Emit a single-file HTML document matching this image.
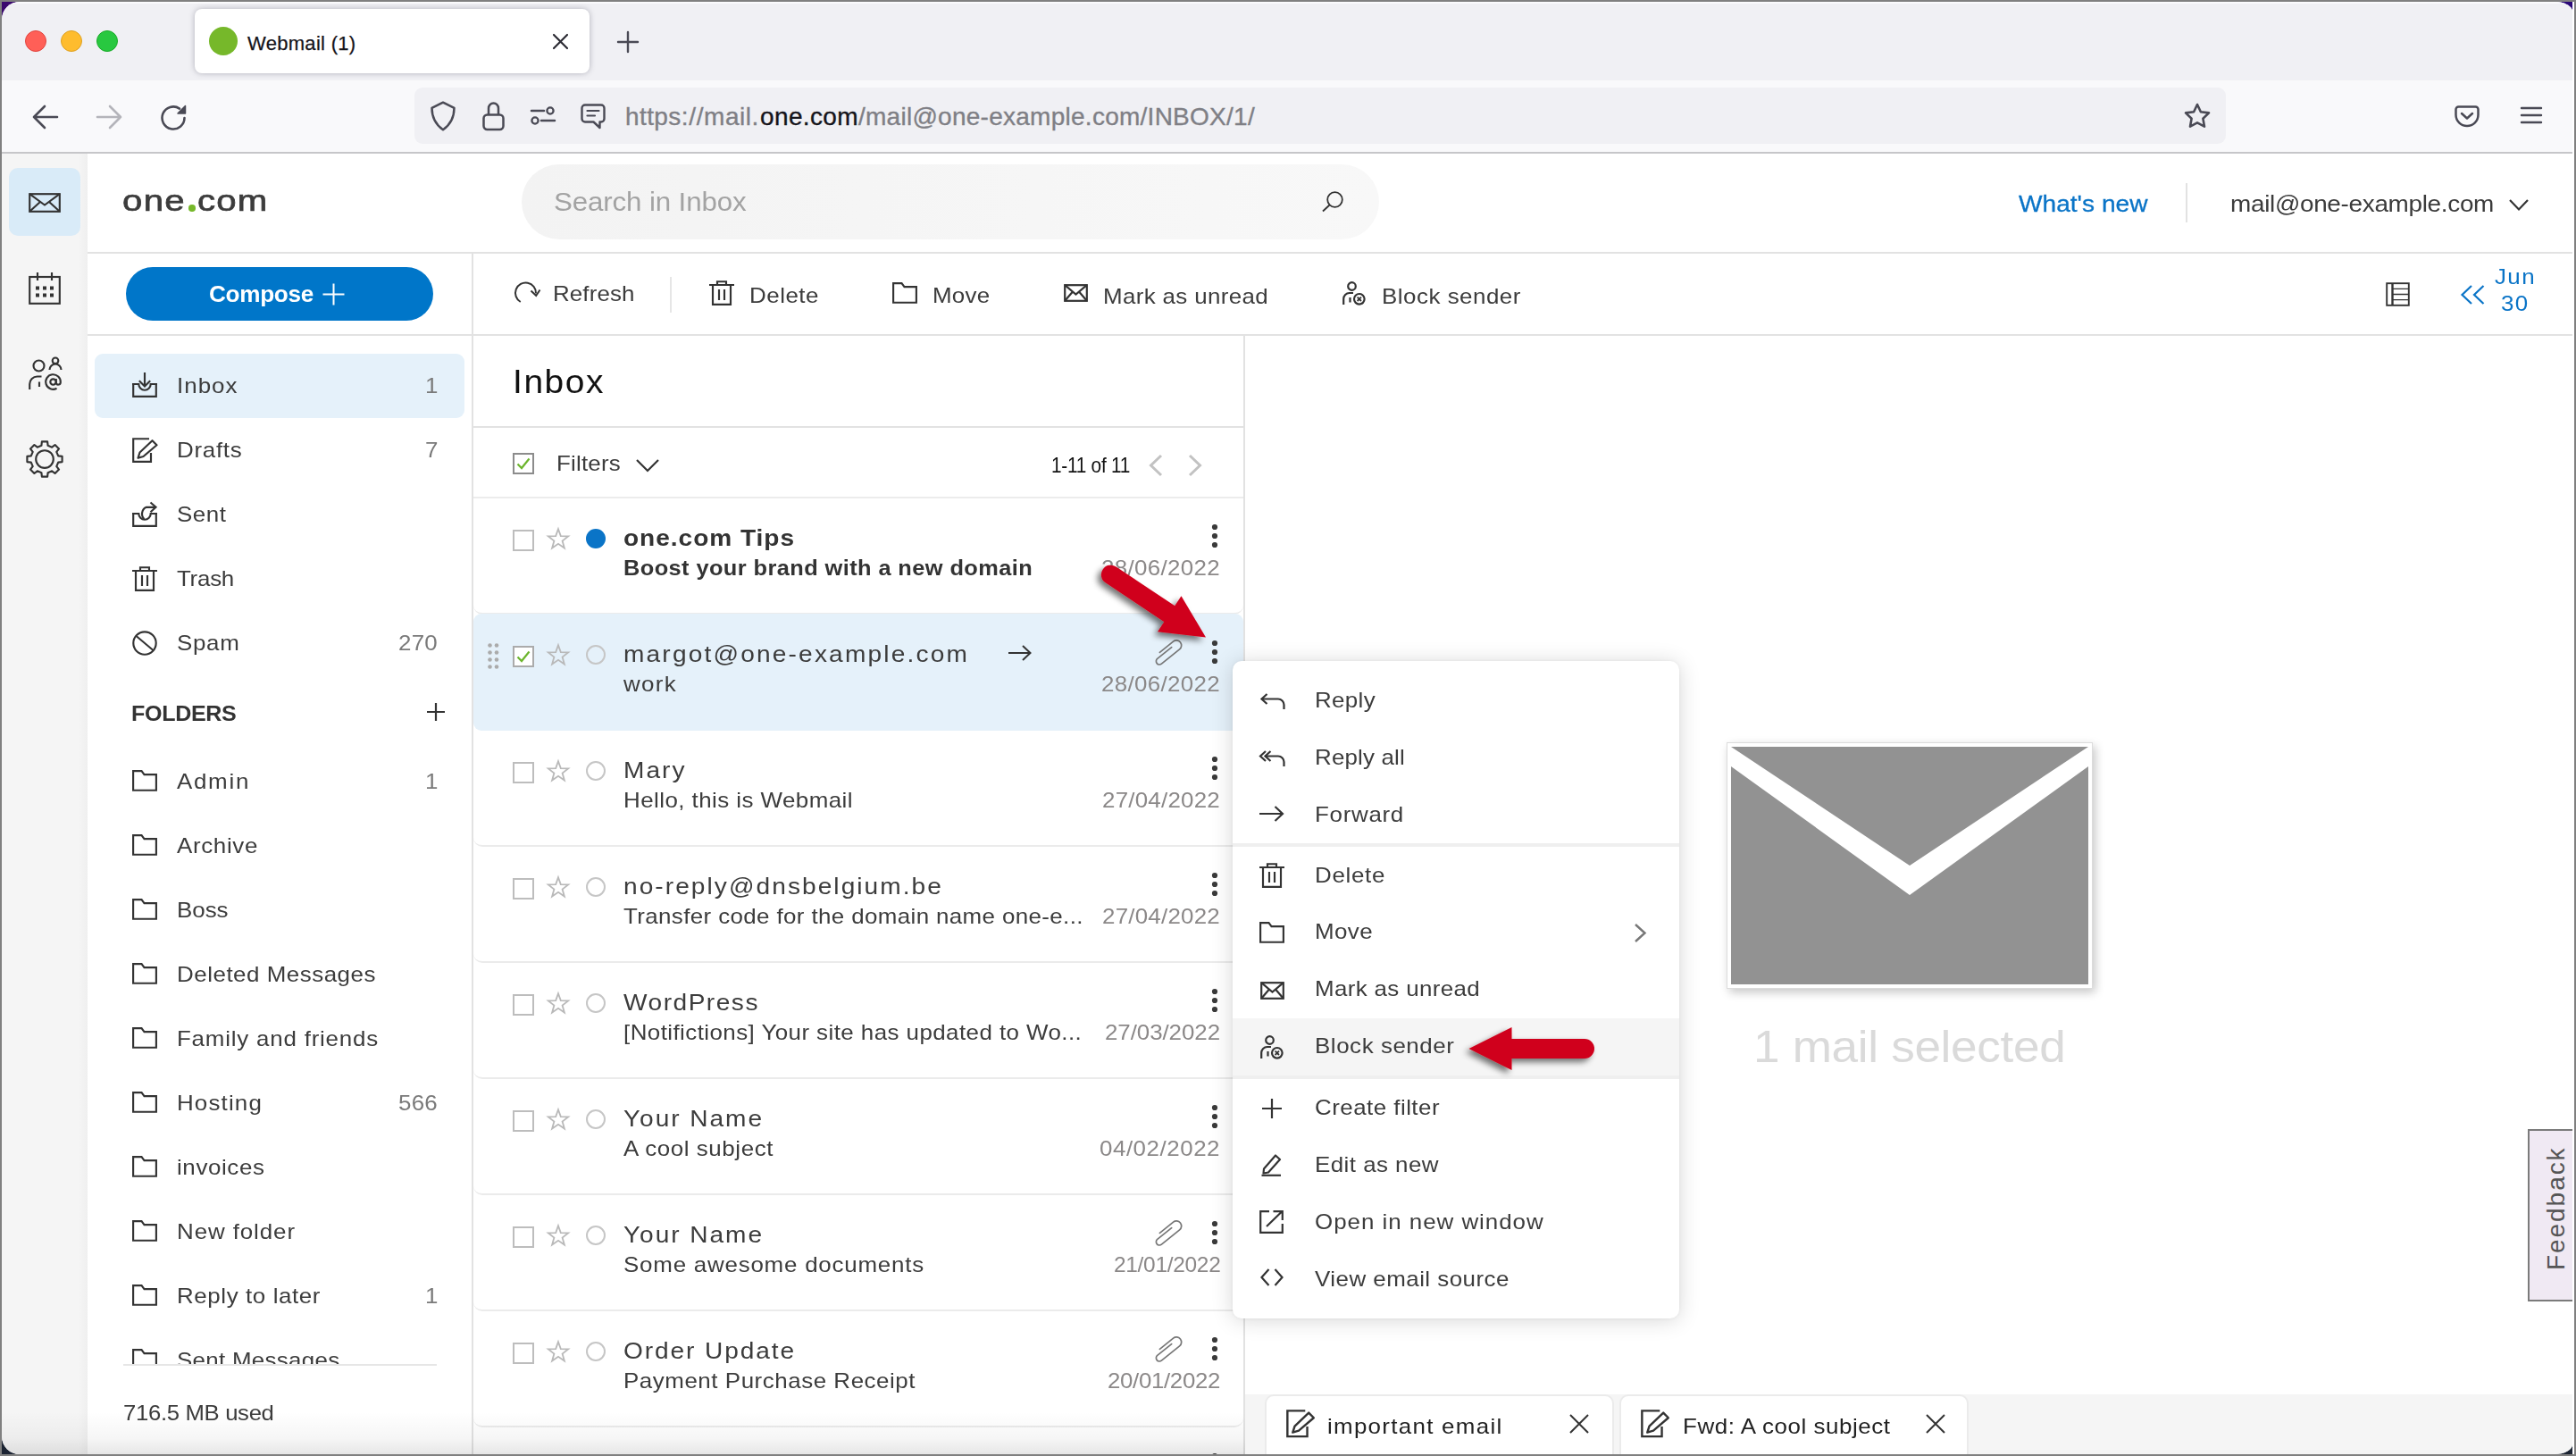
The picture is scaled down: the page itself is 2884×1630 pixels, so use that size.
<!DOCTYPE html>
<html lang="en"><head><meta charset="utf-8"><title>Webmail (1)</title>
<style>
html,body{margin:0;padding:0;}
body{width:2884px;height:1630px;overflow:hidden;background:#808080;font-family:'Liberation Sans',sans-serif;}
#screen{position:relative;width:2884px;height:1630px;overflow:hidden;}
#screen div,#screen svg,#screen span.t{position:absolute;box-sizing:border-box;}
span.t{white-space:pre;line-height:1;color:#3c3c3c;transform-origin:0 50%;}
svg{overflow:visible;}
.ic{fill:none;stroke:#333;stroke-width:2.4;}

</style></head>
<body>
<div id="screen">
<div style="left:2px;top:2px;width:30px;height:30px;background:#3a0a6e;"></div>
<div style="left:2850px;top:2px;width:30px;height:30px;background:#2a0878;"></div>
<div style="left:2880px;top:2px;width:2px;height:1626px;background:#fff;"></div>
<div style="left:2px;top:1598px;width:30px;height:30px;background:#1c2433;"></div>
<div style="left:2850px;top:1598px;width:30px;height:30px;background:#1c2433;"></div>
<div id="win" style="left:2px;top:2px;width:2878px;height:1626px;border-radius:20px 20px 20px 20px / 20px 11px 11px 20px;overflow:hidden;background:#fff;">
<div id="w" style="left:-2px;top:-2px;width:2884px;height:1630px;">
<div style="left:0px;top:0px;width:2884px;height:90px;background:#f0f0f4;"></div>
<div style="left:0px;top:2px;width:2884px;height:1.5px;background:#fbfbfd;"></div>
<div style="left:28px;top:34px;width:24px;height:24px;border-radius:50%;background:#ff5f57;border:1px solid #e0443e;"></div>
<div style="left:68px;top:34px;width:24px;height:24px;border-radius:50%;background:#febc2e;border:1px solid #dea123;"></div>
<div style="left:108px;top:34px;width:24px;height:24px;border-radius:50%;background:#28c840;border:1px solid #1aab29;"></div>
<div style="left:218px;top:10px;width:442px;height:72px;background:#fff;border-radius:8px;box-shadow:0 0 6px rgba(60,60,80,.35);"></div>
<div style="left:234px;top:30px;width:32px;height:32px;border-radius:50%;background:#76b82a;"></div>
<span class="t" style="left:277.0px;top:37.9px;font-size:22px;letter-spacing:0.30px;color:#15141a;-webkit-text-stroke:0.25px #15141a;">Webmail (1)</span>
<svg style="left:619px;top:38px;" width="17" height="17" viewBox="0 0 17 17"><path d="M1 1 L16 16 M16 1 L1 16" stroke="#2b2a33" stroke-width="2.2" fill="none" stroke-linecap="round"/></svg>
<svg style="left:691px;top:35px;" width="24" height="24" viewBox="0 0 24 24"><path d="M12 1 V23 M1 12 H23" stroke="#4a4a55" stroke-width="2.4" fill="none" stroke-linecap="round"/></svg>
<div style="left:0px;top:90px;width:2884px;height:80px;background:#f9f9fb;"></div>
<div style="left:0px;top:170px;width:2884px;height:2px;background:#c6c6c9;"></div>
<svg style="left:36px;top:117px;" width="30" height="28" viewBox="0 0 30 28"><path d="M28 14 H2 M14 2 L2 14 L14 26" stroke="#4a4a55" stroke-width="2.6" fill="none" stroke-linecap="round" stroke-linejoin="round"/></svg>
<svg style="left:107px;top:117px;" width="30" height="28" viewBox="0 0 30 28"><path d="M2 14 H28 M16 2 L28 14 L16 26" stroke="#b4b4ba" stroke-width="2.6" fill="none" stroke-linecap="round" stroke-linejoin="round"/></svg>
<svg style="left:179px;top:116px;" width="32" height="32" viewBox="0 0 32 32"><path d="M27.5 16 A12.5 12.5 0 1 1 22 5.6" stroke="#4a4a55" stroke-width="2.6" fill="none" stroke-linecap="round"/><path d="M28.5 2.5 V11 H20 Z" fill="#4a4a55" stroke="#4a4a55" stroke-width="1.5" stroke-linejoin="round"/></svg>
<div style="left:464px;top:98px;width:2028px;height:63px;background:#f0f0f4;border-radius:9px;"></div>
<svg style="left:481px;top:113px;" width="30" height="34" viewBox="0 0 30 34"><path d="M15 1.700 L27.500 7.800 C27.500 19 22.500 27 15 32.300 C7.500 27 2.500 19 2.500 7.800 Z" stroke="#4a4a55" stroke-width="2.500" fill="none" stroke-linejoin="round"/></svg>
<svg style="left:539.5px;top:114px;" width="25" height="32" viewBox="0 0 25 32"><rect x="1.500" y="14.500" width="22" height="16.500" rx="4" stroke="#4a4a55" stroke-width="2.500" fill="none"/><path d="M7 14.500 V7.200 A5.500 5.800 0 0 1 18 7.200 V14.500" stroke="#4a4a55" stroke-width="2.500" fill="none"/></svg>
<svg style="left:594px;top:119px;" width="28" height="22" viewBox="0 0 28 22"><circle cx="22" cy="5" r="3.6" stroke="#4a4a55" stroke-width="2.3" fill="none"/><path d="M1 5 H15" stroke="#4a4a55" stroke-width="2.5" stroke-linecap="round"/><circle cx="5" cy="16" r="3.6" stroke="#4a4a55" stroke-width="2.3" fill="none"/><path d="M12 16 H27" stroke="#4a4a55" stroke-width="2.5" stroke-linecap="round"/></svg>
<svg style="left:650px;top:116px;" width="28" height="29" viewBox="0 0 28 29"><path d="M5 1.5 H23 A3.5 3.5 0 0 1 26.500 5 V17 A3.5 3.5 0 0 1 23 20.5 H21.500 V27 L14.500 20.5 H5 A3.5 3.5 0 0 1 1.500 17 V5 A3.5 3.5 0 0 1 5 1.500 Z" stroke="#4a4a55" stroke-width="2.4" fill="none" stroke-linejoin="round"/><path d="M7.500 8 H20.500 M7.500 13.500 H16" stroke="#4a4a55" stroke-width="2.2" stroke-linecap="round"/></svg>
<span class="t" style="left:700.0px;top:117.3px;font-size:28px;letter-spacing:0.39px;color:#7f7f85;-webkit-text-stroke:0.35px #7f7f85;">https:</span>
<span class="t" style="left:771.3px;top:117.3px;font-size:28px;letter-spacing:0.57px;color:#7f7f85;-webkit-text-stroke:0.35px #7f7f85;">//mail.</span>
<span class="t" style="left:851.0px;top:117.3px;font-size:28px;letter-spacing:0.37px;color:#15141a;-webkit-text-stroke:0.35px #15141a;">one.com</span>
<span class="t" style="left:961.0px;top:117.3px;font-size:28px;letter-spacing:0.26px;color:#7f7f85;-webkit-text-stroke:0.35px #7f7f85;">/mail@one-example.com/INBOX/1/</span>
<svg style="left:2444px;top:114px;" width="32" height="32" viewBox="0 0 32 32"><path d="M16 3 L19.900 11.200 L29 12.400 L22.400 18.700 L24 27.700 L16 23.400 L8 27.700 L9.600 18.700 L3 12.400 L12.100 11.200 Z" stroke="#4a4a55" stroke-width="2.6" fill="none" stroke-linejoin="round"/></svg>
<svg style="left:2748px;top:118px;" width="28" height="25" viewBox="0 0 28 25"><path d="M4.500 1.500 H23.500 A3 3 0 0 1 26.500 4.500 V10.500 A12.500 12.500 0 0 1 1.500 10.500 V4.500 A3 3 0 0 1 4.500 1.500 Z" stroke="#4a4a55" stroke-width="2.5" fill="none"/><path d="M8 9 L14 14.500 L20 9" stroke="#4a4a55" stroke-width="2.5" fill="none" stroke-linecap="round" stroke-linejoin="round"/></svg>
<svg style="left:2822px;top:119px;" width="24" height="20" viewBox="0 0 24 20"><path d="M1 2 H23 M1 10 H23 M1 18 H23" stroke="#4a4a55" stroke-width="2.4" stroke-linecap="round"/></svg>
<div style="left:0px;top:172px;width:98px;height:1460px;background:linear-gradient(90deg,#f5f5f5 0,#f5f5f5 88px,#efefef 100%);"></div>
<div style="left:10px;top:188px;width:80px;height:76px;background:#d9ebf8;border-radius:10px;"></div>
<svg style="left:32px;top:216px;" width="36" height="22" viewBox="0 0 36 22"><g stroke="#333" stroke-width="2.15" fill="none" ><rect x="1.2" y="1.2" width="33.600" height="19.600"/><path d="M1.200 1.200 L18 13.500 L34.800 1.200 M1.200 20.800 L13 10 M34.800 20.800 L23 10"/></g></svg>
<svg style="left:32px;top:305px;" width="36" height="36" viewBox="0 0 36 36"><g stroke="#333" stroke-width="2.15" fill="none" ><rect x="1.2" y="5" width="33.600" height="29.800"/><path d="M10 0 V9 M26 0 V9"/><rect x="8" y="15.5" width="4" height="4" fill="#333" stroke="none"/><rect x="16" y="15.5" width="4" height="4" fill="#333" stroke="none"/><rect x="24" y="15.5" width="4" height="4" fill="#333" stroke="none"/><rect x="8" y="23.5" width="4" height="4" fill="#333" stroke="none"/><rect x="16" y="23.5" width="4" height="4" fill="#333" stroke="none"/><rect x="24" y="23.5" width="4" height="4" fill="#333" stroke="none"/></g></svg>
<svg style="left:32px;top:400px;" width="38" height="37" viewBox="0 0 38 37"><g stroke="#333" stroke-width="2.15" fill="none" ><circle cx="11.500" cy="9.500" r="6"/><path d="M1.200 36 V30 A8.500 8.500 0 0 1 9.700 21.500 H14.500"/><path d="M12 27.500 V33"/><circle cx="30" cy="3.800" r="3.300"/><path d="M23.500 14 A6.500 6.500 0 0 1 36.500 14"/><circle cx="27.500" cy="27.500" r="3.200"/><path d="M30.800 24 V29 A2.600 2.600 0 0 0 35.800 28 A8.300 8.300 0 1 0 31.500 34.800"/></g></svg>
<svg style="left:29px;top:493px;" width="42" height="42" viewBox="0 0 42 42"><g stroke="#333" stroke-width="2.15" fill="none" ><path d="M17.9 1.4 L24.1 1.4 L24.6 5.8 L29.2 7.7 L32.6 5.0 L37.0 9.4 L34.3 12.8 L36.2 17.4 L40.6 17.9 L40.6 24.1 L36.2 24.6 L34.3 29.2 L37.0 32.6 L32.6 37.0 L29.2 34.3 L24.6 36.2 L24.1 40.6 L17.9 40.6 L17.4 36.2 L12.8 34.3 L9.4 37.0 L5.0 32.6 L7.7 29.2 L5.8 24.6 L1.4 24.1 L1.4 17.9 L5.8 17.4 L7.7 12.8 L5.0 9.4 L9.4 5.0 L12.8 7.7 L17.4 5.8 Z" stroke-linejoin="round"/><circle cx="21" cy="21" r="9.800"/></g></svg>
<div style="left:98px;top:282px;width:2786px;height:2px;background:#e2e2e2;"></div>
<span class="t" style="left:137.0px;top:208.1px;font-size:33.5px;letter-spacing:1.09px;transform:scaleX(1.200);-webkit-text-stroke:0.700px #3c3c3c;">one</span>
<div style="left:211px;top:229px;width:7.5px;height:7.5px;border-radius:50%;background:#76b82a;"></div>
<span class="t" style="left:221.0px;top:208.1px;font-size:33.5px;letter-spacing:0.98px;transform:scaleX(1.200);-webkit-text-stroke:0.700px #3c3c3c;">com</span>
<div style="left:584px;top:184px;width:960px;height:84px;background:linear-gradient(90deg,#f3f3f3,#f8f8f8);border-radius:42px;"></div>
<span class="t" style="left:620.0px;top:212.0px;font-size:29px;letter-spacing:-0.13px;transform:scaleX(1.080);color:#a3a3a3;">Search in Inbox</span>
<svg style="left:1480px;top:214px;" width="26" height="24" viewBox="0 0 26 24"><g stroke="#333" stroke-width="1.8" fill="none" ><circle cx="14.500" cy="9.500" r="8.300"/><path d="M8.500 15.500 L1 22.500"/></g></svg>
<span class="t" style="left:2259.5px;top:214.5px;font-size:26px;letter-spacing:0.02px;transform:scaleX(1.080);color:#0a74c7;-webkit-text-stroke:0.3px #0a74c7;">What&#x27;s new</span>
<div style="left:2447px;top:205px;width:2px;height:44px;background:#e2e2e2;"></div>
<span class="t" style="left:2497.0px;top:214.5px;font-size:26px;letter-spacing:-0.30px;transform:scaleX(1.074);">mail@one-example.com</span>
<svg style="left:2809px;top:223px;" width="22" height="13" viewBox="0 0 22 13"><g stroke="#333" stroke-width="2.2" fill="none" ><path d="M1 1 L11 11.500 L21 1"/></g></svg>
<div style="left:98px;top:374px;width:2786px;height:2px;background:#e2e2e2;"></div>
<div style="left:528px;top:284px;width:2px;height:1346px;background:#e2e2e2;"></div>
<div style="left:141px;top:299px;width:344px;height:60px;background:#0076c9;border-radius:30px;"></div>
<span class="t" style="left:234.0px;top:316.8px;font-size:25px;letter-spacing:-0.30px;transform:scaleX(1.046);font-weight:700;color:#fff;">Compose</span>
<svg style="left:361px;top:317px;" width="25" height="25" viewBox="0 0 25 25"><path d="M12.500 0.500 V24.500 M0.500 12.500 H24.500" stroke="#fff" stroke-width="2" fill="none"/></svg>
<svg style="left:575px;top:316px;" width="30" height="27" viewBox="0 0 30 27"><g stroke="#333" stroke-width="2" fill="none" ><path d="M7.750 22 A11.500 11.500 0 1 1 25 12.500"/><path d="M19.500 9.500 L25.200 15 L29.500 8.500"/></g></svg>
<span class="t" style="left:618.5px;top:317.2px;font-size:24px;letter-spacing:0.10px;transform:scaleX(1.080);">Refresh</span>
<div style="left:750px;top:310px;width:2px;height:40px;background:#e6e6e6;"></div>
<svg style="left:794px;top:314px;" width="28" height="28" viewBox="0 0 28 28"><g stroke="#333" stroke-width="2.15" fill="none" ><path d="M0 5 H28 M9 5 V1.200 H19 V5"/><path d="M4 5 V26.800 H24 V5"/><path d="M11 10 V22 M17 10 V22"/></g></svg>
<span class="t" style="left:839.0px;top:319.2px;font-size:24px;letter-spacing:0.47px;transform:scaleX(1.080);">Delete</span>
<svg style="left:999px;top:316px;" width="28" height="25" viewBox="0 0 28 25"><g stroke="#333" stroke-width="2.15" fill="none" ><path d="M1.100 22.700 V1.100 H10.500 L13.500 5.100 H26.900 V22.700 Z"/></g></svg>
<span class="t" style="left:1044.0px;top:319.2px;font-size:24px;letter-spacing:0.26px;transform:scaleX(1.080);">Move</span>
<svg style="left:1191px;top:318px;" width="27" height="20" viewBox="0 0 27 20"><g stroke="#333" stroke-width="2.2" fill="none" ><rect x="1.200" y="1.200" width="24.600" height="17.600"/><path d="M1.200 1.200 L13.500 11.500 L25.800 1.200 M1.200 18.800 L10 8.500 M25.800 18.800 L17 8.500"/></g></svg>
<span class="t" style="left:1235.0px;top:319.9px;font-size:24px;letter-spacing:0.32px;transform:scaleX(1.080);">Mark as unread</span>
<svg style="left:1503px;top:315px;" width="27" height="27" viewBox="0 0 27 27"><g stroke="#333" stroke-width="2.2" fill="none" ><circle cx="10.500" cy="5.500" r="4.300"/><path d="M1.200 26 V19.500 A6.500 6.500 0 0 1 7.700 13 H12"/><path d="M8.500 18 V23.500"/><circle cx="18.800" cy="19.800" r="5.800"/><path d="M16.600 17.600 L21 22 M21 17.600 L16.600 22" stroke-width="1.800"/></g></svg>
<span class="t" style="left:1547.0px;top:319.9px;font-size:24px;letter-spacing:0.47px;transform:scaleX(1.080);">Block sender</span>
<svg style="left:2671px;top:316px;" width="27" height="27" viewBox="0 0 27 27"><g stroke="#333" stroke-width="1.9" fill="none" ><rect x="1.200" y="1.200" width="24.600" height="24.600"/><path d="M7.500 1.200 V25.800" stroke-width="2.400"/><path d="M8 7.300 H26 M8 13.500 H26 M8 19.700 H26" stroke-width="1.300"/></g></svg>
<svg style="left:2755px;top:319px;" width="27" height="22" viewBox="0 0 27 22"><g stroke="#0a74c7" stroke-width="2.2" fill="none" ><path d="M12 1 L1.500 11 L12 21 M25.500 1 L15 11 L25.500 21"/></g></svg>
<span class="t" style="left:2793.0px;top:298.2px;font-size:24px;letter-spacing:1.30px;transform:scaleX(1.080);color:#0a74c7;">Jun</span>
<span class="t" style="left:2800.0px;top:327.7px;font-size:24px;letter-spacing:1.23px;transform:scaleX(1.080);color:#0a74c7;">30</span>
<div style="left:106px;top:396px;width:414px;height:72px;background:#e5f1fa;border-radius:9px;"></div>
<svg style="left:148px;top:417px;" width="28" height="28" viewBox="0 0 28 28"><g stroke="#333" stroke-width="2.15" fill="none" ><path d="M1.200 13 V26.800 H26.800 V13"/><path d="M0 13 H7.300 A6.700 6.700 0 0 0 20.700 13 H28"/><path d="M14 0 V15 M7.800 9.200 L14 15.400 L20.200 9.200"/></g></svg>
<span class="t" style="left:198.0px;top:420.2px;font-size:24px;letter-spacing:0.94px;transform:scaleX(1.080);">Inbox</span>
<span class="t" style="left:476.1px;top:420.2px;font-size:24px;transform:scaleX(1.080);color:#7a7a7a;">1</span>
<svg style="left:148px;top:489.5px;" width="29" height="28" viewBox="0 0 29 28"><g stroke="#333" stroke-width="2.15" fill="none" ><path d="M21 17 V26.800 H1.200 V1.200 H19"/><path d="M22.500 3.200 L27.500 8.200 L12.500 21 L6.500 22.800 L8.500 16.500 Z" stroke-linejoin="round"/></g></svg>
<span class="t" style="left:198.0px;top:492.2px;font-size:24px;letter-spacing:0.67px;transform:scaleX(1.080);">Drafts</span>
<span class="t" style="left:476.1px;top:492.2px;font-size:24px;transform:scaleX(1.080);color:#7a7a7a;">7</span>
<svg style="left:148px;top:561.5px;" width="28" height="28" viewBox="0 0 28 28"><g stroke="#333" stroke-width="2.15" fill="none" ><path d="M1.200 13 V26.800 H26.800 V13"/><path d="M0 13 H7.300 A6.700 6.700 0 0 0 20.700 13 H28"/><path d="M13.500 19 A8 8 0 0 1 16 5.800 H26"/><path d="M20.500 0.500 L26.500 5.800 L20.500 11.200"/></g></svg>
<span class="t" style="left:198.0px;top:564.2px;font-size:24px;letter-spacing:0.50px;transform:scaleX(1.080);">Sent</span>
<svg style="left:148px;top:633.5px;" width="28" height="28" viewBox="0 0 28 28"><g stroke="#333" stroke-width="2.15" fill="none" ><path d="M0 5 H28 M9 5 V1.200 H19 V5"/><path d="M4 5 V26.800 H24 V5"/><path d="M11 10 V22 M17 10 V22"/></g></svg>
<span class="t" style="left:198.0px;top:636.2px;font-size:24px;letter-spacing:-0.24px;transform:scaleX(1.080);">Trash</span>
<svg style="left:148px;top:706px;" width="28" height="28" viewBox="0 0 28 28"><g stroke="#333" stroke-width="2.15" fill="none" ><circle cx="14" cy="14" r="12.700"/><path d="M4.500 6 L23.500 22"/></g></svg>
<span class="t" style="left:198.0px;top:708.2px;font-size:24px;letter-spacing:0.64px;transform:scaleX(1.080);">Spam</span>
<span class="t" style="left:446.0px;top:708.2px;font-size:24px;letter-spacing:0.23px;transform:scaleX(1.080);color:#7a7a7a;">270</span>
<span class="t" style="left:146.5px;top:787.2px;font-size:24px;letter-spacing:-0.30px;transform:scaleX(1.044);font-weight:700;color:#333;">FOLDERS</span>
<svg style="left:478px;top:787px;" width="20" height="20" viewBox="0 0 20 20"><path d="M10 0 V20 M0 10 H20" stroke="#333" stroke-width="2.200" fill="none"/></svg>
<div style="left:100px;top:840px;width:426px;height:688px;overflow:hidden;"><div style="left:-100px;top:-840px;width:600px;height:1630px;">
<svg style="left:148px;top:862.0px;" width="28" height="25" viewBox="0 0 28 25"><g stroke="#333" stroke-width="2.15" fill="none" ><path d="M1.100 22.700 V1.100 H10.500 L13.500 5.100 H26.900 V22.700 Z"/></g></svg>
<span class="t" style="left:198.0px;top:862.7px;font-size:24px;letter-spacing:1.58px;transform:scaleX(1.080);">Admin</span>
<span class="t" style="left:476.1px;top:862.7px;font-size:24px;transform:scaleX(1.080);color:#7a7a7a;">1</span>
<svg style="left:148px;top:934.0px;" width="28" height="25" viewBox="0 0 28 25"><g stroke="#333" stroke-width="2.15" fill="none" ><path d="M1.100 22.700 V1.100 H10.500 L13.500 5.100 H26.900 V22.700 Z"/></g></svg>
<span class="t" style="left:198.0px;top:934.7px;font-size:24px;letter-spacing:0.60px;transform:scaleX(1.080);">Archive</span>
<svg style="left:148px;top:1006.0px;" width="28" height="25" viewBox="0 0 28 25"><g stroke="#333" stroke-width="2.15" fill="none" ><path d="M1.100 22.700 V1.100 H10.500 L13.500 5.100 H26.900 V22.700 Z"/></g></svg>
<span class="t" style="left:198.0px;top:1006.7px;font-size:24px;letter-spacing:-0.03px;transform:scaleX(1.080);">Boss</span>
<svg style="left:148px;top:1078.0px;" width="28" height="25" viewBox="0 0 28 25"><g stroke="#333" stroke-width="2.15" fill="none" ><path d="M1.100 22.700 V1.100 H10.500 L13.500 5.100 H26.900 V22.700 Z"/></g></svg>
<span class="t" style="left:198.0px;top:1078.7px;font-size:24px;letter-spacing:0.48px;transform:scaleX(1.080);">Deleted Messages</span>
<svg style="left:148px;top:1150.0px;" width="28" height="25" viewBox="0 0 28 25"><g stroke="#333" stroke-width="2.15" fill="none" ><path d="M1.100 22.700 V1.100 H10.500 L13.500 5.100 H26.900 V22.700 Z"/></g></svg>
<span class="t" style="left:198.0px;top:1150.7px;font-size:24px;letter-spacing:0.73px;transform:scaleX(1.080);">Family and friends</span>
<svg style="left:148px;top:1222.0px;" width="28" height="25" viewBox="0 0 28 25"><g stroke="#333" stroke-width="2.15" fill="none" ><path d="M1.100 22.700 V1.100 H10.500 L13.500 5.100 H26.900 V22.700 Z"/></g></svg>
<span class="t" style="left:198.0px;top:1222.7px;font-size:24px;letter-spacing:1.07px;transform:scaleX(1.080);">Hosting</span>
<span class="t" style="left:446.0px;top:1222.7px;font-size:24px;letter-spacing:0.23px;transform:scaleX(1.080);color:#7a7a7a;">566</span>
<svg style="left:148px;top:1294.0px;" width="28" height="25" viewBox="0 0 28 25"><g stroke="#333" stroke-width="2.15" fill="none" ><path d="M1.100 22.700 V1.100 H10.500 L13.500 5.100 H26.900 V22.700 Z"/></g></svg>
<span class="t" style="left:198.0px;top:1294.7px;font-size:24px;letter-spacing:0.56px;transform:scaleX(1.080);">invoices</span>
<svg style="left:148px;top:1366.0px;" width="28" height="25" viewBox="0 0 28 25"><g stroke="#333" stroke-width="2.15" fill="none" ><path d="M1.100 22.700 V1.100 H10.500 L13.500 5.100 H26.900 V22.700 Z"/></g></svg>
<span class="t" style="left:198.0px;top:1366.7px;font-size:24px;letter-spacing:0.84px;transform:scaleX(1.080);">New folder</span>
<svg style="left:148px;top:1438.0px;" width="28" height="25" viewBox="0 0 28 25"><g stroke="#333" stroke-width="2.15" fill="none" ><path d="M1.100 22.700 V1.100 H10.500 L13.500 5.100 H26.900 V22.700 Z"/></g></svg>
<span class="t" style="left:198.0px;top:1438.7px;font-size:24px;letter-spacing:0.55px;transform:scaleX(1.080);">Reply to later</span>
<span class="t" style="left:476.1px;top:1438.7px;font-size:24px;transform:scaleX(1.080);color:#7a7a7a;">1</span>
<svg style="left:148px;top:1510.0px;" width="28" height="25" viewBox="0 0 28 25"><g stroke="#333" stroke-width="2.15" fill="none" ><path d="M1.100 22.700 V1.100 H10.500 L13.500 5.100 H26.900 V22.700 Z"/></g></svg>
<span class="t" style="left:198.0px;top:1510.7px;font-size:24px;letter-spacing:0.27px;transform:scaleX(1.080);">Sent Messages</span>
</div></div>
<div style="left:138px;top:1527px;width:351px;height:2px;background:#e6e6e6;"></div>
<span class="t" style="left:137.5px;top:1570.2px;font-size:24px;letter-spacing:-0.30px;transform:scaleX(1.070);">716.5 MB used</span>
<div style="left:1392px;top:376px;width:2px;height:1254px;background:#e2e2e2;"></div>
<span class="t" style="left:574.0px;top:410.0px;font-size:36px;letter-spacing:1.46px;transform:scaleX(1.080);color:#111;">Inbox</span>
<div style="left:530px;top:477px;width:862px;height:2px;background:#e2e2e2;"></div>
<div style="left:530px;top:556px;width:862px;height:2px;background:#ececec;"></div>
<div style="left:574px;top:507px;width:24px;height:24px;border:2px solid #8c8c8c;background:#fff;"><svg style="left:2px;top:3px;" width="16" height="14" viewBox="0 0 16 14"><path d="M1.500 7.500 L6 12 L14.500 1.500" stroke="#6cb52d" stroke-width="2.200" fill="none"/></svg></div>
<span class="t" style="left:623.0px;top:507.2px;font-size:24px;letter-spacing:0.19px;transform:scaleX(1.080);">Filters</span>
<svg style="left:712px;top:514px;" width="26" height="14" viewBox="0 0 26 14"><g stroke="#333" stroke-width="2.2" fill="none" ><path d="M1 1 L13 13 L25 1"/></g></svg>
<span class="t" style="left:1177.0px;top:509.2px;font-size:24px;letter-spacing:-0.30px;transform:scaleX(0.867);color:#111;">1-11 of 11</span>
<svg style="left:1287px;top:509px;" width="14" height="24" viewBox="0 0 14 24"><g stroke="#c2c2c2" stroke-width="3" fill="none" ><path d="M13 1 L1.500 12 L13 23"/></g></svg>
<svg style="left:1331px;top:509px;" width="14" height="24" viewBox="0 0 14 24"><g stroke="#c2c2c2" stroke-width="3" fill="none" ><path d="M1 1 L12.500 12 L1 23"/></g></svg>
<div style="left:530px;top:558px;width:862px;height:130px;border-bottom:2px solid #ebebeb;border-radius:0 0 10px 10px;"></div>
<div style="left:574px;top:592.5px;width:24px;height:24px;border:2px solid #bdbdbd;background:#fff;"></div>
<svg style="left:611px;top:590px;" width="28" height="28" viewBox="0 0 28 28"><path d="M14.0 2.2 L16.8 10.1 L25.2 10.4 L18.6 15.5 L20.9 23.5 L14.0 18.8 L7.1 23.5 L9.4 15.5 L2.8 10.4 L11.2 10.1 Z" stroke="#b9b9b9" stroke-width="1.800" fill="none"/></svg>
<div style="left:656px;top:592px;width:22px;height:22px;border-radius:50%;background:#0a74c7;"></div>
<span class="t" style="left:698.0px;top:589.0px;font-size:26px;letter-spacing:0.89px;transform:scaleX(1.080);font-weight:700;color:#333;">one.com Tips</span>
<span class="t" style="left:698.0px;top:624.6px;font-size:23.5px;letter-spacing:0.38px;transform:scaleX(1.080);font-weight:700;color:#333;">Boost your brand with a new domain</span>
<span class="t" style="left:1233.0px;top:624.2px;font-size:24px;letter-spacing:0.30px;transform:scaleX(1.080);color:#8b8888;">28/06/2022</span>
<svg style="left:1356px;top:586px;" width="8" height="28" viewBox="0 0 8 28"><circle cx="4" cy="4" r="3.100" fill="#3a3a3a"/><circle cx="4" cy="14" r="3.100" fill="#3a3a3a"/><circle cx="4" cy="24" r="3.100" fill="#3a3a3a"/></svg>
<div style="left:530px;top:687px;width:862px;height:131px;background:#e5f1fa;border-radius:9px;top:687px;"></div>
<svg style="left:546px;top:720px;" width="13" height="29" viewBox="0 0 13 29"><circle cx="2.5" cy="2.5" r="2.300" fill="#ababab"/><circle cx="2.5" cy="10.5" r="2.300" fill="#ababab"/><circle cx="2.5" cy="18.5" r="2.300" fill="#ababab"/><circle cx="2.5" cy="26.5" r="2.300" fill="#ababab"/><circle cx="10" cy="2.5" r="2.300" fill="#ababab"/><circle cx="10" cy="10.5" r="2.300" fill="#ababab"/><circle cx="10" cy="18.5" r="2.300" fill="#ababab"/><circle cx="10" cy="26.5" r="2.300" fill="#ababab"/></svg>
<div style="left:574px;top:722.5px;width:24px;height:24px;border:2px solid #ababab;background:#fff;"><svg style="left:2px;top:3px;" width="16" height="14" viewBox="0 0 16 14"><path d="M1.500 7.500 L6 12 L14.500 1.500" stroke="#6cb52d" stroke-width="2.200" fill="none"/></svg></div>
<svg style="left:611px;top:720px;" width="28" height="28" viewBox="0 0 28 28"><path d="M14.0 2.2 L16.8 10.1 L25.2 10.4 L18.6 15.5 L20.9 23.5 L14.0 18.8 L7.1 23.5 L9.4 15.5 L2.8 10.4 L11.2 10.1 Z" stroke="#b9b9b9" stroke-width="1.800" fill="none"/></svg>
<div style="left:656px;top:722px;width:22px;height:22px;border-radius:50%;border:2px solid #c6c6c6;"></div>
<span class="t" style="left:698.0px;top:719.0px;font-size:26px;letter-spacing:2.02px;transform:scaleX(1.080);">margot@one-example.com</span>
<span class="t" style="left:698.0px;top:754.2px;font-size:24px;letter-spacing:1.22px;transform:scaleX(1.080);">work</span>
<span class="t" style="left:1233.0px;top:754.2px;font-size:24px;letter-spacing:0.30px;transform:scaleX(1.080);color:#8b8888;">28/06/2022</span>
<svg style="left:1291px;top:716.5px;" width="34" height="28" viewBox="0 0 34 28"><g transform="translate(16.500,13.500) rotate(-39)"><path d="M7 -2 H-13.500 a3.700 3.700 0 0 0 0 7.400 H12.500 a5.600 5.600 0 0 0 0 -11.200 H-7" stroke="#777" stroke-width="1.700" fill="none" stroke-linecap="round"/></g></svg>
<svg style="left:1356px;top:716px;" width="8" height="28" viewBox="0 0 8 28"><circle cx="4" cy="4" r="3.100" fill="#3a3a3a"/><circle cx="4" cy="14" r="3.100" fill="#3a3a3a"/><circle cx="4" cy="24" r="3.100" fill="#3a3a3a"/></svg>
<svg style="left:1129px;top:721px;" width="26" height="20" viewBox="0 0 26 20"><g stroke="#333" stroke-width="2" fill="none" ><path d="M0 10 H24.500 M16 2 L24.500 10 L16 18"/></g></svg>
<div style="left:530px;top:818px;width:862px;height:130px;border-bottom:2px solid #ebebeb;border-radius:0 0 10px 10px;"></div>
<div style="left:574px;top:852.5px;width:24px;height:24px;border:2px solid #bdbdbd;background:#fff;"></div>
<svg style="left:611px;top:850px;" width="28" height="28" viewBox="0 0 28 28"><path d="M14.0 2.2 L16.8 10.1 L25.2 10.4 L18.6 15.5 L20.9 23.5 L14.0 18.8 L7.1 23.5 L9.4 15.5 L2.8 10.4 L11.2 10.1 Z" stroke="#b9b9b9" stroke-width="1.800" fill="none"/></svg>
<div style="left:656px;top:852px;width:22px;height:22px;border-radius:50%;border:2px solid #c6c6c6;"></div>
<span class="t" style="left:698.0px;top:849.0px;font-size:26px;letter-spacing:1.87px;transform:scaleX(1.080);">Mary</span>
<span class="t" style="left:698.0px;top:884.2px;font-size:24px;letter-spacing:0.41px;transform:scaleX(1.080);">Hello, this is Webmail</span>
<span class="t" style="left:1234.0px;top:884.2px;font-size:24px;letter-spacing:0.21px;transform:scaleX(1.080);color:#8b8888;">27/04/2022</span>
<svg style="left:1356px;top:846px;" width="8" height="28" viewBox="0 0 8 28"><circle cx="4" cy="4" r="3.100" fill="#3a3a3a"/><circle cx="4" cy="14" r="3.100" fill="#3a3a3a"/><circle cx="4" cy="24" r="3.100" fill="#3a3a3a"/></svg>
<div style="left:530px;top:948px;width:862px;height:130px;border-bottom:2px solid #ebebeb;border-radius:0 0 10px 10px;"></div>
<div style="left:574px;top:982.5px;width:24px;height:24px;border:2px solid #bdbdbd;background:#fff;"></div>
<svg style="left:611px;top:980px;" width="28" height="28" viewBox="0 0 28 28"><path d="M14.0 2.2 L16.8 10.1 L25.2 10.4 L18.6 15.5 L20.9 23.5 L14.0 18.8 L7.1 23.5 L9.4 15.5 L2.8 10.4 L11.2 10.1 Z" stroke="#b9b9b9" stroke-width="1.800" fill="none"/></svg>
<div style="left:656px;top:982px;width:22px;height:22px;border-radius:50%;border:2px solid #c6c6c6;"></div>
<span class="t" style="left:698.0px;top:979.0px;font-size:26px;letter-spacing:1.91px;transform:scaleX(1.080);">no-reply@dnsbelgium.be</span>
<span class="t" style="left:698.0px;top:1014.2px;font-size:24px;letter-spacing:0.35px;transform:scaleX(1.080);">Transfer code for the domain name one-e...</span>
<span class="t" style="left:1234.0px;top:1014.2px;font-size:24px;letter-spacing:0.21px;transform:scaleX(1.080);color:#8b8888;">27/04/2022</span>
<svg style="left:1356px;top:976px;" width="8" height="28" viewBox="0 0 8 28"><circle cx="4" cy="4" r="3.100" fill="#3a3a3a"/><circle cx="4" cy="14" r="3.100" fill="#3a3a3a"/><circle cx="4" cy="24" r="3.100" fill="#3a3a3a"/></svg>
<div style="left:530px;top:1078px;width:862px;height:130px;border-bottom:2px solid #ebebeb;border-radius:0 0 10px 10px;"></div>
<div style="left:574px;top:1112.5px;width:24px;height:24px;border:2px solid #bdbdbd;background:#fff;"></div>
<svg style="left:611px;top:1110px;" width="28" height="28" viewBox="0 0 28 28"><path d="M14.0 2.2 L16.8 10.1 L25.2 10.4 L18.6 15.5 L20.9 23.5 L14.0 18.8 L7.1 23.5 L9.4 15.5 L2.8 10.4 L11.2 10.1 Z" stroke="#b9b9b9" stroke-width="1.800" fill="none"/></svg>
<div style="left:656px;top:1112px;width:22px;height:22px;border-radius:50%;border:2px solid #c6c6c6;"></div>
<span class="t" style="left:698.0px;top:1109.0px;font-size:26px;letter-spacing:1.40px;transform:scaleX(1.080);">WordPress</span>
<span class="t" style="left:698.0px;top:1144.2px;font-size:24px;letter-spacing:0.40px;transform:scaleX(1.080);">[Notifictions] Your site has updated to Wo...</span>
<span class="t" style="left:1237.0px;top:1144.2px;font-size:24px;letter-spacing:-0.07px;transform:scaleX(1.080);color:#8b8888;">27/03/2022</span>
<svg style="left:1356px;top:1106px;" width="8" height="28" viewBox="0 0 8 28"><circle cx="4" cy="4" r="3.100" fill="#3a3a3a"/><circle cx="4" cy="14" r="3.100" fill="#3a3a3a"/><circle cx="4" cy="24" r="3.100" fill="#3a3a3a"/></svg>
<div style="left:530px;top:1208px;width:862px;height:130px;border-bottom:2px solid #ebebeb;border-radius:0 0 10px 10px;"></div>
<div style="left:574px;top:1242.5px;width:24px;height:24px;border:2px solid #bdbdbd;background:#fff;"></div>
<svg style="left:611px;top:1240px;" width="28" height="28" viewBox="0 0 28 28"><path d="M14.0 2.2 L16.8 10.1 L25.2 10.4 L18.6 15.5 L20.9 23.5 L14.0 18.8 L7.1 23.5 L9.4 15.5 L2.8 10.4 L11.2 10.1 Z" stroke="#b9b9b9" stroke-width="1.800" fill="none"/></svg>
<div style="left:656px;top:1242px;width:22px;height:22px;border-radius:50%;border:2px solid #c6c6c6;"></div>
<span class="t" style="left:698.0px;top:1239.0px;font-size:26px;letter-spacing:1.81px;transform:scaleX(1.080);">Your Name</span>
<span class="t" style="left:698.0px;top:1274.2px;font-size:24px;letter-spacing:0.53px;transform:scaleX(1.080);">A cool subject</span>
<span class="t" style="left:1231.0px;top:1274.2px;font-size:24px;letter-spacing:0.49px;transform:scaleX(1.080);color:#8b8888;">04/02/2022</span>
<svg style="left:1356px;top:1236px;" width="8" height="28" viewBox="0 0 8 28"><circle cx="4" cy="4" r="3.100" fill="#3a3a3a"/><circle cx="4" cy="14" r="3.100" fill="#3a3a3a"/><circle cx="4" cy="24" r="3.100" fill="#3a3a3a"/></svg>
<div style="left:530px;top:1338px;width:862px;height:130px;border-bottom:2px solid #ebebeb;border-radius:0 0 10px 10px;"></div>
<div style="left:574px;top:1372.5px;width:24px;height:24px;border:2px solid #bdbdbd;background:#fff;"></div>
<svg style="left:611px;top:1370px;" width="28" height="28" viewBox="0 0 28 28"><path d="M14.0 2.2 L16.8 10.1 L25.2 10.4 L18.6 15.5 L20.9 23.5 L14.0 18.8 L7.1 23.5 L9.4 15.5 L2.8 10.4 L11.2 10.1 Z" stroke="#b9b9b9" stroke-width="1.800" fill="none"/></svg>
<div style="left:656px;top:1372px;width:22px;height:22px;border-radius:50%;border:2px solid #c6c6c6;"></div>
<span class="t" style="left:698.0px;top:1369.0px;font-size:26px;letter-spacing:1.81px;transform:scaleX(1.080);">Your Name</span>
<span class="t" style="left:698.0px;top:1404.2px;font-size:24px;letter-spacing:0.72px;transform:scaleX(1.080);">Some awesome documents</span>
<span class="t" style="left:1246.5px;top:1404.2px;font-size:24px;letter-spacing:-0.30px;transform:scaleX(1.020);color:#8b8888;">21/01/2022</span>
<svg style="left:1291px;top:1366.5px;" width="34" height="28" viewBox="0 0 34 28"><g transform="translate(16.500,13.500) rotate(-39)"><path d="M7 -2 H-13.500 a3.700 3.700 0 0 0 0 7.400 H12.500 a5.600 5.600 0 0 0 0 -11.200 H-7" stroke="#777" stroke-width="1.700" fill="none" stroke-linecap="round"/></g></svg>
<svg style="left:1356px;top:1366px;" width="8" height="28" viewBox="0 0 8 28"><circle cx="4" cy="4" r="3.100" fill="#3a3a3a"/><circle cx="4" cy="14" r="3.100" fill="#3a3a3a"/><circle cx="4" cy="24" r="3.100" fill="#3a3a3a"/></svg>
<div style="left:530px;top:1468px;width:862px;height:130px;border-bottom:2px solid #ebebeb;border-radius:0 0 10px 10px;"></div>
<div style="left:574px;top:1502.5px;width:24px;height:24px;border:2px solid #bdbdbd;background:#fff;"></div>
<svg style="left:611px;top:1500px;" width="28" height="28" viewBox="0 0 28 28"><path d="M14.0 2.2 L16.8 10.1 L25.2 10.4 L18.6 15.5 L20.9 23.5 L14.0 18.8 L7.1 23.5 L9.4 15.5 L2.8 10.4 L11.2 10.1 Z" stroke="#b9b9b9" stroke-width="1.800" fill="none"/></svg>
<div style="left:656px;top:1502px;width:22px;height:22px;border-radius:50%;border:2px solid #c6c6c6;"></div>
<span class="t" style="left:698.0px;top:1499.0px;font-size:26px;letter-spacing:1.76px;transform:scaleX(1.080);">Order Update</span>
<span class="t" style="left:698.0px;top:1534.2px;font-size:24px;letter-spacing:0.50px;transform:scaleX(1.080);">Payment Purchase Receipt</span>
<span class="t" style="left:1240.0px;top:1534.2px;font-size:24px;letter-spacing:-0.30px;transform:scaleX(1.076);color:#8b8888;">20/01/2022</span>
<svg style="left:1291px;top:1496.5px;" width="34" height="28" viewBox="0 0 34 28"><g transform="translate(16.500,13.500) rotate(-39)"><path d="M7 -2 H-13.500 a3.700 3.700 0 0 0 0 7.400 H12.500 a5.600 5.600 0 0 0 0 -11.200 H-7" stroke="#777" stroke-width="1.700" fill="none" stroke-linecap="round"/></g></svg>
<svg style="left:1356px;top:1496px;" width="8" height="28" viewBox="0 0 8 28"><circle cx="4" cy="4" r="3.100" fill="#3a3a3a"/><circle cx="4" cy="14" r="3.100" fill="#3a3a3a"/><circle cx="4" cy="24" r="3.100" fill="#3a3a3a"/></svg>
<svg style="left:1356px;top:1626px;" width="8" height="28" viewBox="0 0 8 28"><circle cx="4" cy="4" r="3.100" fill="#3a3a3a"/><circle cx="4" cy="14" r="3.100" fill="#3a3a3a"/><circle cx="4" cy="24" r="3.100" fill="#3a3a3a"/></svg>
<div style="left:0px;top:1580px;width:2884px;height:50px;background:linear-gradient(180deg,rgba(0,0,0,0) 0,rgba(0,0,0,.035) 60%,rgba(0,0,0,.10) 100%);"></div>
<div style="left:1933px;top:831px;width:410px;height:276px;background:#fff;border:1px solid #dcdcdc;box-shadow:3px 4px 10px rgba(0,0,0,.22);"></div>
<svg style="left:1938px;top:836px;" width="400" height="266" viewBox="0 0 400 266"><rect width="400" height="266" fill="#929292"/><path d="M0 0 L200 133 L400 0 V22 L200 166 L0 22 Z" fill="#fff"/></svg>
<span class="t" style="left:1962.5px;top:1146.7px;font-size:50px;letter-spacing:-0.30px;transform:scaleX(1.062);color:#dadada;">1 mail selected</span>
<div style="left:2830px;top:1264px;width:52px;height:193px;background:#f0e9f3;border:2px solid #7b7b7b;border-right:none;"></div>
<div style="left:2862px;top:1354px;width:0;height:0;transform:rotate(-90deg);"><span class="t" style="left:-68px;top:-14px;font-size:28px;color:#555;letter-spacing:1.95px;">Feedback</span></div>
<div style="left:1394px;top:1561px;width:1490px;height:70px;background:#f5f5f5;"></div>
<div style="left:1416px;top:1561px;width:391px;height:80px;background:#fff;border:2px solid #ebebeb;border-radius:10px 10px 0 0;"></div>
<svg style="left:1440px;top:1578px;" width="32.500" height="31.500" viewBox="0 0 29 28"><g stroke="#333" stroke-width="2.15" fill="none" ><path d="M21 17 V26.800 H1.200 V1.200 H19"/><path d="M22.500 3.200 L27.500 8.200 L12.500 21 L6.500 22.800 L8.500 16.500 Z" stroke-linejoin="round"/></g></svg>
<span class="t" style="left:1485.5px;top:1585.2px;font-size:24px;letter-spacing:1.19px;transform:scaleX(1.080);color:#222;">important email</span>
<svg style="left:1757px;top:1583px;" width="22" height="22" viewBox="0 0 22 22"><path d="M1 1 L21 21 M21 1 L1 21" stroke="#333" stroke-width="2" fill="none"/></svg>
<div style="left:1813px;top:1561px;width:391px;height:80px;background:#fff;border:2px solid #ebebeb;border-radius:10px 10px 0 0;"></div>
<svg style="left:1837px;top:1578px;" width="32.500" height="31.500" viewBox="0 0 29 28"><g stroke="#333" stroke-width="2.15" fill="none" ><path d="M21 17 V26.800 H1.200 V1.200 H19"/><path d="M22.500 3.200 L27.500 8.200 L12.500 21 L6.500 22.800 L8.500 16.500 Z" stroke-linejoin="round"/></g></svg>
<span class="t" style="left:1884.0px;top:1585.2px;font-size:24px;letter-spacing:0.52px;transform:scaleX(1.080);color:#222;">Fwd: A cool subject</span>
<svg style="left:2155.5px;top:1583px;" width="22" height="22" viewBox="0 0 22 22"><path d="M1 1 L21 21 M21 1 L1 21" stroke="#333" stroke-width="2" fill="none"/></svg>
<div style="left:1380px;top:740px;width:500px;height:736px;background:#fff;border-radius:10px;box-shadow:0 2px 24px rgba(0,0,0,.16),0 0 4px rgba(0,0,0,.05);"></div>
<div style="left:1380px;top:1140px;width:500px;height:65px;background:#f5f5f5;"></div>
<div style="left:1380px;top:944px;width:500px;height:4px;background:#efefef;"></div>
<div style="left:1380px;top:1204px;width:500px;height:4px;background:#efefef;"></div>
<span class="t" style="left:1472.0px;top:772.2px;font-size:24px;letter-spacing:0.32px;transform:scaleX(1.080);">Reply</span>
<span class="t" style="left:1472.0px;top:836.2px;font-size:24px;letter-spacing:0.16px;transform:scaleX(1.080);">Reply all</span>
<span class="t" style="left:1472.0px;top:900.2px;font-size:24px;letter-spacing:0.65px;transform:scaleX(1.080);">Forward</span>
<span class="t" style="left:1472.0px;top:967.7px;font-size:24px;letter-spacing:0.63px;transform:scaleX(1.080);">Delete</span>
<span class="t" style="left:1472.0px;top:1031.2px;font-size:24px;letter-spacing:0.37px;transform:scaleX(1.080);">Move</span>
<span class="t" style="left:1472.0px;top:1095.2px;font-size:24px;letter-spacing:0.32px;transform:scaleX(1.080);">Mark as unread</span>
<span class="t" style="left:1472.0px;top:1159.2px;font-size:24px;letter-spacing:0.51px;transform:scaleX(1.080);">Block sender</span>
<span class="t" style="left:1472.0px;top:1227.7px;font-size:24px;letter-spacing:0.43px;transform:scaleX(1.080);">Create filter</span>
<span class="t" style="left:1472.0px;top:1292.2px;font-size:24px;letter-spacing:0.42px;transform:scaleX(1.080);">Edit as new</span>
<span class="t" style="left:1472.0px;top:1356.2px;font-size:24px;letter-spacing:0.90px;transform:scaleX(1.080);">Open in new window</span>
<span class="t" style="left:1472.0px;top:1420.2px;font-size:24px;letter-spacing:0.44px;transform:scaleX(1.080);">View email source</span>
<svg style="left:1411px;top:777px;" width="28" height="18" viewBox="0 0 28 18"><g stroke="#333" stroke-width="2.2" fill="none" ><path d="M1.200 5.500 H20 A6.500 6.500 0 0 1 26.500 12 V17"/><path d="M7.500 0 L1.500 5.500 L7.500 11"/></g></svg>
<svg style="left:1410px;top:841px;" width="29" height="18" viewBox="0 0 29 18"><g stroke="#333" stroke-width="2.2" fill="none" ><path d="M6 5.500 H21 A6.500 6.500 0 0 1 27.500 12 V17"/><path d="M12.500 0 L6.500 5.500 L12.500 11 M7 0 L1 5.500 L7 11"/></g></svg>
<svg style="left:1410px;top:901px;" width="28" height="20" viewBox="0 0 28 20"><g stroke="#333" stroke-width="2.2" fill="none" ><path d="M0 10 H26 M17.500 2 L26 10 L17.500 18"/></g></svg>
<svg style="left:1410px;top:966px;" width="28" height="28" viewBox="0 0 28 28"><g stroke="#333" stroke-width="2.15" fill="none" ><path d="M0 5 H28 M9 5 V1.200 H19 V5"/><path d="M4 5 V26.800 H24 V5"/><path d="M11 10 V22 M17 10 V22"/></g></svg>
<svg style="left:1410px;top:1031.5px;" width="28" height="25" viewBox="0 0 28 25"><g stroke="#333" stroke-width="2.15" fill="none" ><path d="M1.100 22.700 V1.100 H10.500 L13.500 5.100 H26.900 V22.700 Z"/></g></svg>
<svg style="left:1830px;top:1034px;" width="13" height="21" viewBox="0 0 13 21"><g stroke="#777" stroke-width="2.4" fill="none" ><path d="M1 1 L11.500 10.500 L1 20"/></g></svg>
<svg style="left:1410.5px;top:1098.5px;" width="27" height="20" viewBox="0 0 27 20"><g stroke="#333" stroke-width="2.2" fill="none" ><rect x="1.200" y="1.200" width="24.600" height="17.600"/><path d="M1.200 1.200 L13.500 11.500 L25.800 1.200 M1.200 18.800 L10 8.500 M25.800 18.800 L17 8.500"/></g></svg>
<svg style="left:1410.5px;top:1158.5px;" width="27" height="27" viewBox="0 0 27 27"><g stroke="#333" stroke-width="2.2" fill="none" ><circle cx="10.500" cy="5.500" r="4.300"/><path d="M1.200 26 V19.500 A6.500 6.500 0 0 1 7.700 13 H12"/><path d="M8.500 18 V23.500"/><circle cx="18.800" cy="19.800" r="5.800"/><path d="M16.600 17.600 L21 22 M21 17.600 L16.600 22" stroke-width="1.800"/></g></svg>
<svg style="left:1413px;top:1229.5px;" width="22" height="22" viewBox="0 0 22 22"><path d="M11 0 V22 M0 11 H22" stroke="#333" stroke-width="2.200" fill="none"/></svg>
<svg style="left:1412px;top:1290px;" width="24" height="27" viewBox="0 0 24 27"><g stroke="#333" stroke-width="2.2" fill="none" ><path d="M3 18.500 L16 3.500 L21 8 L8 22.500 L2.500 23.500 Z" stroke-linejoin="round"/><path d="M0.500 25.800 H22"/></g></svg>
<svg style="left:1410px;top:1355px;" width="27" height="26" viewBox="0 0 27 26"><g stroke="#333" stroke-width="2.2" fill="none" ><path d="M25.800 15 V24.800 H1.200 V1.200 H11"/><path d="M8 18 L25 1.500 M15.500 1.200 H25.800 V11"/></g></svg>
<svg style="left:1411px;top:1420px;" width="26" height="20" viewBox="0 0 26 20"><g stroke="#333" stroke-width="2.2" fill="none" ><path d="M9.500 1 L1.500 10 L9.500 19 M16.500 1 L24.500 10 L16.500 19"/></g></svg>
<svg style="left:1200px;top:620px;" width="190" height="120" viewBox="0 0 190 120"><defs><filter id="sh1" x="-30%" y="-30%" width="160%" height="160%"><feGaussianBlur in="SourceAlpha" stdDeviation="3.500"/><feOffset dx="-4.500" dy="4"/><feComponentTransfer><feFuncA type="linear" slope="0.550"/></feComponentTransfer><feMerge><feMergeNode/><feMergeNode in="SourceGraphic"/></feMerge></filter></defs><g filter="url(#sh1)" transform="translate(-1200,-620)"><path d="M1243.600 643.400 L1309 687" stroke="#d0021b" stroke-width="21.500" stroke-linecap="round" fill="none"/><path d="M1322.500 667.300 L1350 713.500 L1296 707.300 Z" fill="#d0021b"/></g></svg>
<svg style="left:1630px;top:1135px;" width="170" height="80" viewBox="0 0 170 80"><g filter="url(#sh1)" transform="translate(-1630,-1135)"><path d="M1690 1174 H1774" stroke="#d0021b" stroke-width="22" stroke-linecap="round" fill="none"/><path d="M1692.500 1150 L1644.500 1174 L1692.500 1198 Z" fill="#d0021b"/></g></svg>
</div></div>
</div>
</body></html>
